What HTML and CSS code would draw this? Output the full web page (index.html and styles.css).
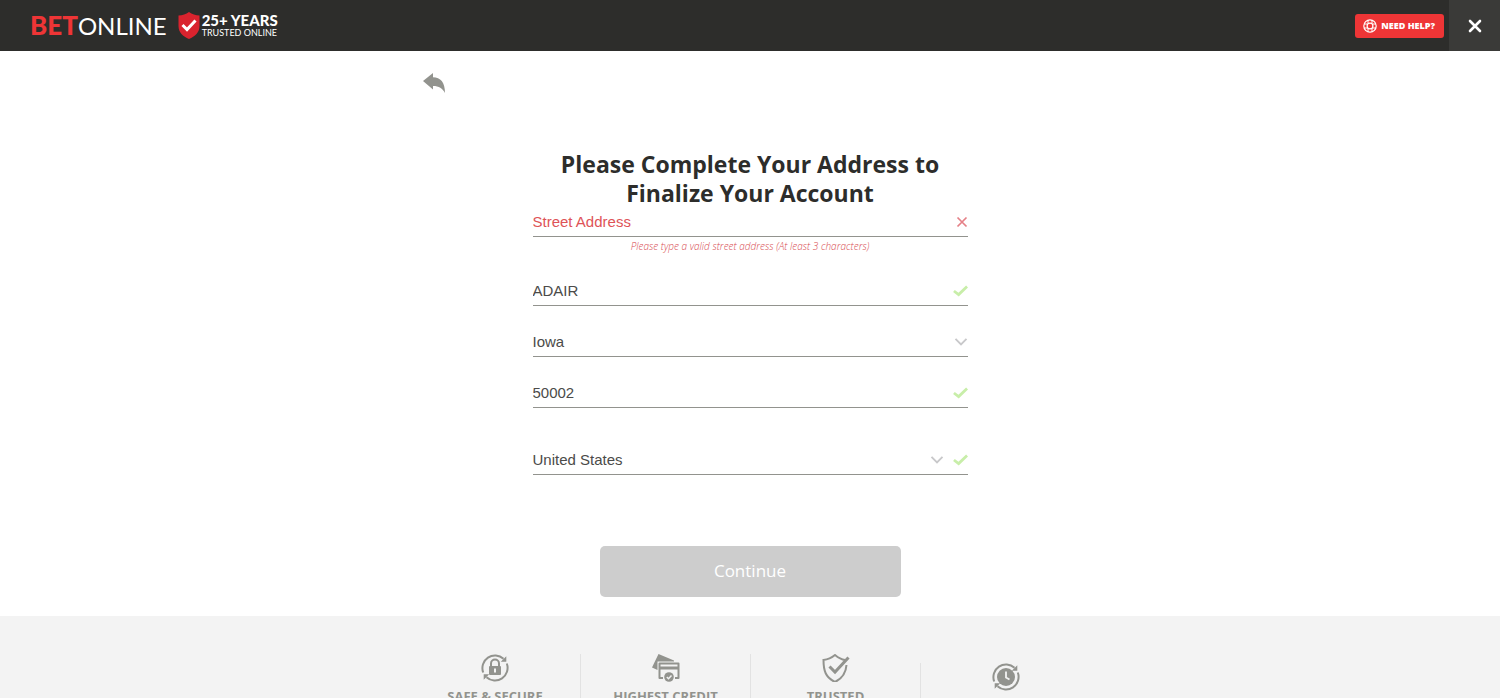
FILE: index.html
```html
<!DOCTYPE html>
<html lang="en">

<head>
    <meta charset="UTF-8">
    <meta name="viewport" content="width=device-width, initial-scale=1.0">
    <title>BetOnline - Complete Your Address</title>
    <link rel="stylesheet" href="styles.css">
</head>

<body>
    <svg class="sprite" aria-hidden="true">
        <symbol id="icon-check" viewBox="0 0 16 12">
            <path d="M1 6 6 9.800 15 1.200" fill="none" stroke="currentColor" stroke-width="3"/>
        </symbol>
        <symbol id="icon-arrow" viewBox="0 0 14 10">
            <path d="M1.500 1.800 7 7.300l5.500-5.500" fill="none" stroke="currentColor" stroke-width="1.900"/>
        </symbol>
        <symbol id="icon-cycle" viewBox="0 0 28 28">
            <path d="M2.200 18.500A12.600 12.600 0 0 1 22.500 4.800M25.800 9.500A12.600 12.600 0 0 1 5.500 23.200" fill="none" stroke="currentColor" stroke-width="2"/>
            <path d="M25.300 2.200v5.500h-5.500zM2.700 25.800v-5.500h5.500z" fill="currentColor"/>
        </symbol>
    </svg>

    <div class="page">
        <header class="header">
            <a class="logo" href="#">
                <span class="logo-name"><b>BET</b>ONLINE</span>
                <svg class="logo-shield" viewBox="0 0 22 27" aria-hidden="true">
                    <path d="M11 0c3 2.200 6.500 3.200 10.500 3.500V14c0 6.500-4.500 10.500-10.500 13C5 24.500.5 20.500.5 14V3.500C4.500 3.200 8 2.200 11 0z" fill="#d9232e"/>
                    <path d="M4.500 13 9 17.500l8.500-9" fill="none" stroke="#fff" stroke-width="3"/>
                </svg>
                <span class="logo-tag"><b>25+ YEARS</b><span>TRUSTED ONLINE</span></span>
            </a>
            <div class="header-actions">
                <button type="button" class="help-btn">
                    <svg viewBox="0 0 14 14" aria-hidden="true">
                        <g fill="none" stroke="#fff">
                            <circle cx="7" cy="7" r="6.200" stroke-width="1.200"/>
                            <circle cx="7" cy="7" r="2.900" stroke-width="1.200"/>
                            <path d="M5 1v3.500M9 1v3.500M5 9.500V13M9 9.500V13M1 5h3.500M9.500 5H13M1 9h3.500M9.500 9H13" stroke-width="1"/>
                        </g>
                    </svg>
                    NEED HELP?
                </button>
                <button type="button" class="close-btn" aria-label="Close">
                    <svg viewBox="0 0 14 14" aria-hidden="true">
                        <path d="M2 2l10 10M12 2 2 12" stroke="#fff" stroke-width="2.600" stroke-linecap="round"/>
                    </svg>
                </button>
            </div>
        </header>

        <main class="content">
            <button type="button" class="back-btn" aria-label="Back">
                <svg viewBox="0 0 22 20" aria-hidden="true">
                    <path d="M0 8 10 0v4.300C17.500 4.500 22 9 22 20c-2.500-4.800-6-7-12-7v3.500z" fill="#92938e"/>
                </svg>
            </button>

            <form class="address-form">
                <h1 class="title">Please Complete Your Address to Finalize Your Account</h1>
                <div class="field field-invalid">
                    <input type="text" placeholder="Street Address" aria-label="Street Address" aria-describedby="street-error">
                    <svg class="icon-cross" viewBox="0 0 12 12" aria-hidden="true">
                        <path d="M1.500 1.500l9 9M10.500 1.500l-9 9" stroke="currentColor" stroke-width="1.700"/>
                    </svg>
                </div>
                <p class="error" id="street-error">Please type a valid street address (At least 3 characters)</p>
                <div class="field">
                    <input type="text" value="ADAIR" aria-label="City">
                    <svg class="icon-check" aria-hidden="true"><use href="#icon-check"/></svg>
                </div>
                <div class="field">
                    <select aria-label="State">
                        <option>Iowa</option>
                    </select>
                    <svg class="icon-arrow" aria-hidden="true"><use href="#icon-arrow"/></svg>
                </div>
                <div class="field">
                    <input type="text" value="50002" aria-label="Zip Code">
                    <svg class="icon-check" aria-hidden="true"><use href="#icon-check"/></svg>
                </div>
                <div class="field field-country">
                    <select aria-label="Country">
                        <option>United States</option>
                    </select>
                    <svg class="icon-arrow" aria-hidden="true"><use href="#icon-arrow"/></svg>
                    <svg class="icon-check" aria-hidden="true"><use href="#icon-check"/></svg>
                </div>
                <button type="submit" class="continue-btn" disabled>Continue</button>
            </form>
        </main>

        <footer class="footer">
            <ul class="benefits">
                <li>
                    <svg viewBox="0 0 28 28" aria-hidden="true">
                        <use href="#icon-cycle"/>
                        <path d="M10 13V9.500a4 4 0 0 1 8 0V13" fill="none" stroke="currentColor" stroke-width="2"/>
                        <rect x="8" y="12" width="12" height="9" rx="1" fill="currentColor"/>
                        <path d="M14 14.500v4" stroke="#f3f3f3" stroke-width="2"/>
                    </svg>
                    <span>SAFE &amp; SECURE</span>
                </li>
                <li>
                    <svg viewBox="0 0 28 28" aria-hidden="true">
                        <path d="M6.500 0 22 6.500v1H5.500V16L0 13.500z" fill="currentColor"/>
                        <path d="M11 24H7.500V9.500h19V24H23" fill="none" stroke="currentColor" stroke-width="2" stroke-linejoin="round"/>
                        <path d="M7 14h20" stroke="currentColor" stroke-width="3"/>
                        <circle cx="17" cy="23" r="4.800" fill="currentColor"/>
                        <path d="m14.800 23 1.700 1.700 3-3.200" fill="none" stroke="#f3f3f3" stroke-width="1.500"/>
                    </svg>
                    <span>HIGHEST CREDIT</span>
                </li>
                <li>
                    <svg viewBox="0 0 28 28" aria-hidden="true">
                        <path d="M23 6C19 5.500 16 3.500 13 1 10 3.500 6 5.500 1.500 6c0 10.500 2 17.500 11.500 22 8-4 11-10 11.500-17" fill="none" stroke="currentColor" stroke-width="2"/>
                        <path d="m7.500 12.500 5.500 5.500L26.500 3.500" fill="none" stroke="currentColor" stroke-width="3"/>
                    </svg>
                    <span>TRUSTED</span>
                </li>
                <li class="benefit-fast">
                    <svg viewBox="0 0 28 28" aria-hidden="true">
                        <use href="#icon-cycle"/>
                        <circle cx="14" cy="14" r="9" fill="currentColor"/>
                        <path d="M14 8.500v6l3.500 2" fill="none" stroke="#f3f3f3" stroke-width="1.800"/>
                    </svg>
                </li>
            </ul>
        </footer>
    </div>
</body>

</html>
```
FILE: styles.css
```css
* {
    box-sizing: border-box;
}

body {
    margin: 0;
    font-family: "Open Sans", sans-serif;
    color: #2d2d2b;
    background-color: #fff;
}

button {
    border: none;
    padding: 0;
    font-family: inherit;
    cursor: pointer;
}

svg {
    display: block;
}

.sprite {
    display: none;
}

.page {
    display: flex;
    flex-direction: column;
    height: 100vh;
    overflow: hidden;
}

/* header */
.header {
    display: flex;
    flex-shrink: 0;
    justify-content: space-between;
    height: 51px;
    padding-left: 30px;
    background-color: #2d2d2b;
}

.logo {
    display: flex;
    align-items: center;
    color: #fff;
    text-decoration: none;
}

.logo-name {
    font-family: Lato, sans-serif;
    font-size: 24px;
    line-height: 48px;
}

.logo-name b {
    color: #ee3536;
    font-size: 26px;
    font-weight: 900;
}

.logo-shield {
    width: 22px;
    height: 27px;
    margin: 0 2px 0 11px;
}

.logo-tag {
    display: flex;
    flex-direction: column;
    padding-bottom: 2px;
    font-family: Lato, sans-serif;
    font-size: 9px;
    line-height: 9px;
}

.logo-tag b {
    font-size: 15px;
    font-weight: 900;
    line-height: 15px;
}

.header-actions {
    display: flex;
    align-items: center;
}

.help-btn {
    display: flex;
    align-items: center;
    gap: 4px;
    height: 24px;
    margin-right: 5px;
    padding: 0 9px 0 8px;
    border-radius: 3px;
    background-color: #ee3536;
    color: #fff;
    font-size: 9px;
    font-weight: 800;
}

.help-btn svg {
    width: 14px;
    height: 14px;
}

.close-btn {
    display: flex;
    align-items: center;
    justify-content: center;
    width: 51px;
    height: 100%;
    background-color: #3a3a38;
}

.close-btn svg {
    width: 14px;
    height: 14px;
}

/* form */
.content {
    flex-shrink: 0;
    width: 100%;
    max-width: 654px;
    margin: 0 auto;
    padding: 22px 0 19px;
}

.back-btn {
    display: block;
    background: none;
}

.back-btn svg {
    width: 22px;
    height: 20px;
}

.address-form {
    max-width: 435px;
    margin: 57px auto 0;
}

.title {
    margin: 0;
    padding: 0 24px;
    font-size: 23px;
    font-weight: 700;
    line-height: 29px;
    text-align: center;
}

.field {
    display: flex;
    align-items: center;
    gap: 9px;
    height: 29px;
    margin-bottom: 22px;
    border-bottom: 1px solid #92938e;
}

.field input,
.field select {
    flex: 1;
    min-width: 0;
    height: 28px;
    padding: 0 0 2px;
    border: none;
    outline: none;
    appearance: none;
    background: none;
    color: #4b4b49;
    font-family: "Liberation Sans", Arial, sans-serif;
    font-size: 15px;
}

.field-invalid {
    margin-bottom: 0;
}

.field-invalid input::placeholder {
    color: #de5357;
    opacity: 1;
}

.field-country {
    margin: 38px 0 71px;
}

.icon-cross {
    width: 12px;
    height: 12px;
    color: #e58087;
}

.icon-check {
    width: 15px;
    height: 12px;
    color: #c8eea9;
}

.icon-arrow {
    width: 14px;
    height: 10px;
    color: #c8c8ca;
}

.error {
    margin: 0 0 22px;
    color: #d84a50;
    font-size: 10px;
    font-style: italic;
    font-weight: 300;
    line-height: 18px;
    text-align: center;
}

.continue-btn {
    display: block;
    width: 100%;
    max-width: 301px;
    height: 51px;
    margin: 0 auto;
    padding-bottom: 2px;
    border-radius: 5px;
    background-color: #cdcdcd;
    color: #fff;
    font-size: 17px;
}

/* footer */
.footer {
    flex: 1 0 auto;
    padding: 38px 0;
    background-color: #f3f3f3;
}

.benefits {
    display: grid;
    grid-template-columns: repeat(4, 1fr);
    max-width: 680px;
    margin: 0 auto;
    padding: 0;
    list-style: none;
}

.benefits li {
    display: flex;
    flex-direction: column;
    align-items: center;
    gap: 5px;
    color: #92938e;
    font-size: 13px;
    font-weight: 700;
    line-height: 18px;
}

.benefits li + li {
    border-left: 1px solid #e2e2e2;
}

.benefits svg {
    width: 28px;
    height: 28px;
}

.benefits .benefit-fast {
    margin-top: 9px;
}
```
